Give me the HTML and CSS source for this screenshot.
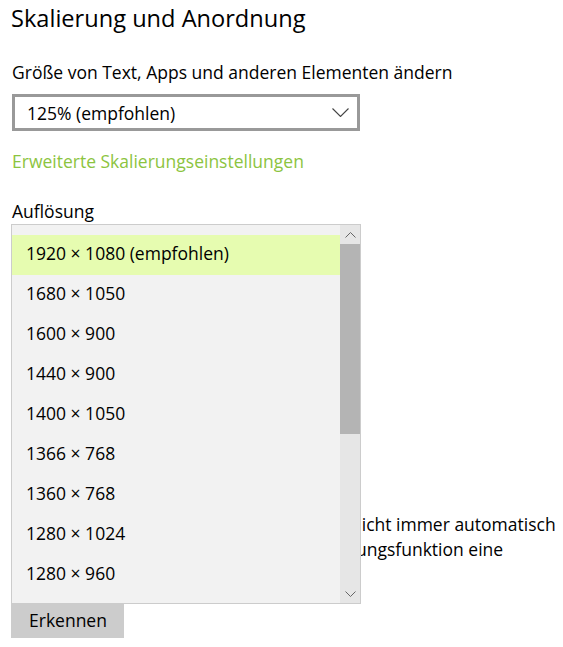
FILE: index.html
```html
<!DOCTYPE html>
<html lang="de">
<head>
<meta charset="utf-8">
<title>Skalierung und Anordnung</title>
<link rel="stylesheet" href="styles.css">
</head>
<body>
<div class="page">
  <h1 class="title">Skalierung und Anordnung</h1>
  <div class="label">Größe von Text, Apps und anderen Elementen ändern</div>
  <div class="combo">
    <span class="combo-text">125% (empfohlen)</span>
    <svg class="chev" width="17" height="9" viewBox="0 0 17 9"><path d="M0.5 0.5 L8.5 8.5 L16.5 0.5" fill="none" stroke="#444" stroke-width="1.1"/></svg>
  </div>
  <a class="link" href="#">Erweiterte Skalierungseinstellungen</a>
  <div class="label label-res">Auflösung</div>
  <div class="res">
    <div class="under">
      <div class="line"><span class="hide hide-1">Ältere Bildschirme werden möglicherweise</span>nicht immer automatisch</div>
      <div class="line"><span class="hide hide-2">verbunden. Probieren Sie mit der Erkenn</span>ungsfunktion eine</div>
      <div class="line"><span class="hide">Verbindung herzustellen.</span></div>
    </div>
    <button class="btn">Erkennen</button>
    <div class="popup">
      <ul class="list">
        <li class="sel">1920 × 1080 (empfohlen)</li>
        <li>1680 × 1050</li>
        <li>1600 × 900</li>
        <li>1440 × 900</li>
        <li>1400 × 1050</li>
        <li>1366 × 768</li>
        <li>1360 × 768</li>
        <li>1280 × 1024</li>
        <li>1280 × 960</li>
      </ul>
      <div class="sb">
        <div class="sb-btn"><svg width="11" height="6" viewBox="0 0 11 6"><path d="M0.5 5.5 L5.5 0.5 L10.5 5.5" fill="none" stroke="#666" stroke-width="1"/></svg></div>
        <div class="sb-thumb"></div>
        <div class="sb-track"></div>
        <div class="sb-btn"><svg width="11" height="6" viewBox="0 0 11 6"><path d="M0.5 0.5 L5.5 5.5 L10.5 0.5" fill="none" stroke="#666" stroke-width="1"/></svg></div>
      </div>
    </div>
  </div>
</div>
</body>
</html>
```
FILE: styles.css
```css
html, body {
  margin: 0;
  padding: 0;
  background: #fff;
}
body {
  font-family: "Open Sans", "Noto Sans", sans-serif;
  color: #000;
  font-size: 17.5px;
}
.page {
  padding: 0 0 0 11px;
}
.title {
  margin: 0;
  padding-top: 2px;
  font-size: 23.6px;
  font-weight: 400;
  line-height: 32px;
  height: 32px;
}
.label {
  margin-top: 26px;
  line-height: 24px;
  padding-left: 1px;
}
.combo {
  box-sizing: border-box;
  margin-top: 10px;
  margin-left: 1px;
  width: 348px;
  height: 37px;
  border: 3px solid #999;
  display: flex;
  align-items: center;
  justify-content: space-between;
  padding: 0 8px 0 12px;
}
.combo-text {
  line-height: 24px;
}
.chev {
  display: block;
}
.link {
  display: block;
  margin-top: 18px;
  padding-left: 1px;
  color: #8cc43f;
  text-decoration: none;
  line-height: 24px;
}
.label-res {
  margin-top: 26px;
}
.res {
  position: relative;
  margin-top: 1px;
}
.under {
  padding-top: 288px;
}
.line {
  white-space: nowrap;
  line-height: 25px;
  height: 25px;
}
.hide {
  display: inline-block;
  width: 330px;
  overflow: hidden;
  vertical-align: top;
  visibility: hidden;
}
.hide-1 {
  width: 340px;
}
.hide-2 {
  width: 345px;
}
.btn {
  display: block;
  margin-top: 17px;
  width: 113px;
  height: 34px;
  border: 0;
  background: #ccc;
  font: inherit;
  line-height: 28px;
  text-align: left;
  padding: 0 0 3px 18px;
  color: #000;
}
.popup {
  position: absolute;
  top: 0;
  left: 0;
  width: 350px;
  height: 380px;
  box-sizing: border-box;
  border: 1px solid #ccc;
  background: #f2f2f2;
  display: flex;
}
.list {
  list-style: none;
  margin: 0;
  padding: 10px 0 0 0;
  flex: 1;
}
.list li {
  height: 40px;
  line-height: 37px;
  padding-left: 14px;
}
.list li.sel {
  background: #e6fcb0;
}
.sb {
  width: 20px;
  background: #e6e6e6;
  display: flex;
  flex-direction: column;
}
.sb-btn {
  height: 19px;
  display: flex;
  align-items: center;
  justify-content: center;
}
.sb-thumb {
  height: 190px;
  background: #b4b4b4;
}
.sb-track {
  flex: 1;
}
```
